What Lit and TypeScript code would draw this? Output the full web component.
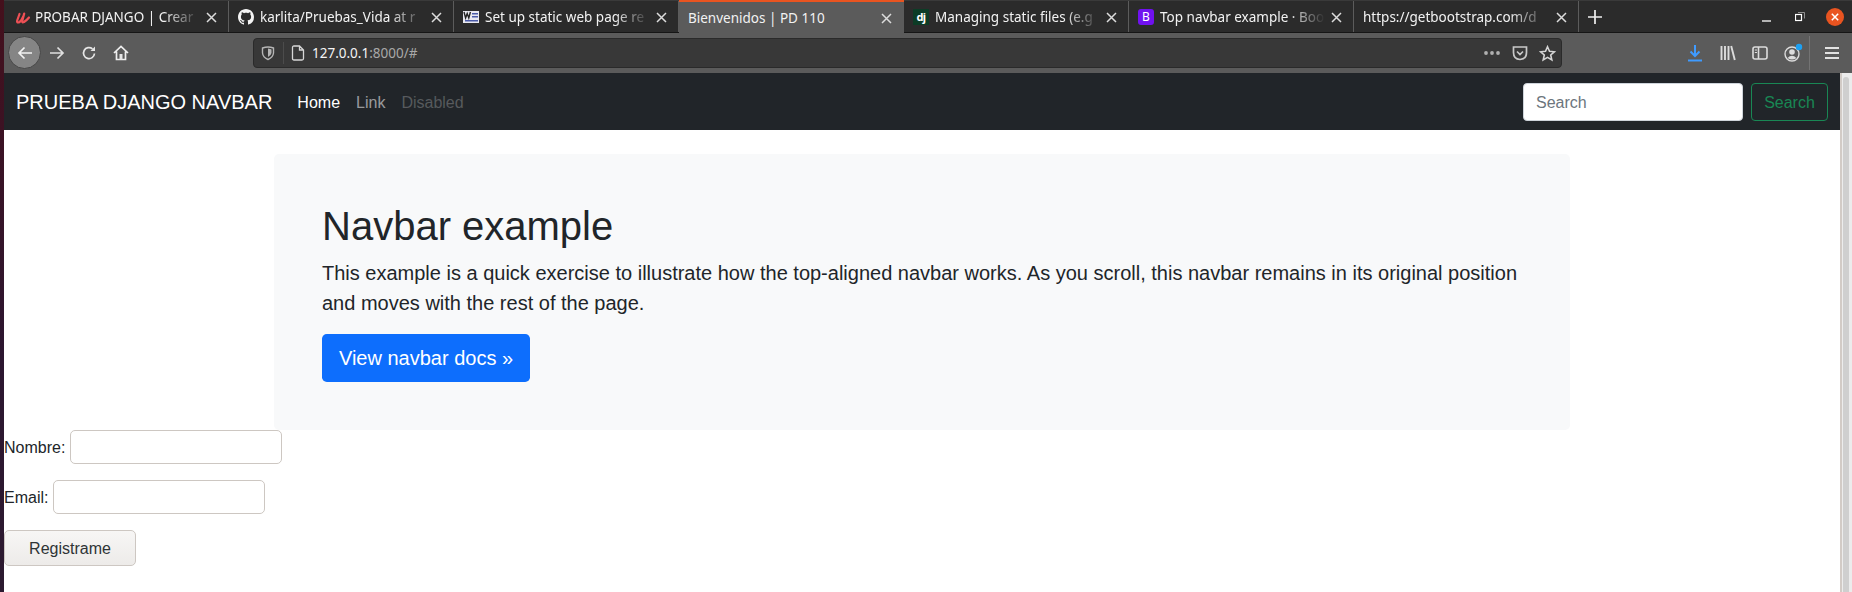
/**
 * Firefox window showing the Bootstrap top navbar example
 */

import { LitElement, html, css, svg } from 'lit';
import { customElement } from 'lit/decorators.js';
import { classMap } from 'lit/directives/class-map.js';

const GITHUB = 'M8 0C3.58 0 0 3.58 0 8c0 3.54 2.29 6.53 5.47 7.59.4.07.55-.17.55-.38 0-.19-.01-.82-.01-1.49-2.01.37-2.53-.49-2.69-.94-.09-.23-.48-.94-.82-1.13-.28-.15-.68-.52-.01-.53.63-.01 1.08.58 1.23.82.72 1.21 1.87.87 2.33.66.07-.52.28-.87.51-1.07-1.78-.2-3.64-.89-3.64-3.95 0-.87.31-1.59.82-2.15-.08-.2-.36-1.02.08-2.12 0 0 .67-.21 2.2.82.64-.18 1.32-.27 2-.27.68 0 1.36.09 2 .27 1.53-1.04 2.2-.82 2.2-.82.44 1.1.16 1.92.08 2.12.51.56.82 1.27.82 2.15 0 3.07-1.87 3.75-3.65 3.95.29.25.54.73.54 1.48 0 1.07-.01 1.93-.01 2.2 0 .21.15.46.55.38A8.013 8.013 0 0016 8c0-4.42-3.58-8-8-8z';

interface Tab {
  title: string;
  icon?: 'udemy' | 'github' | 'word' | 'dj' | 'b';
  active?: boolean;
}

const TABS: Tab[] = [
  { title: 'PROBAR DJANGO | Crear', icon: 'udemy' },
  { title: 'karlita/Pruebas_Vida at r', icon: 'github' },
  { title: 'Set up static web page re', icon: 'word' },
  { title: 'Bienvenidos | PD 110', active: true },
  { title: 'Managing static files (e.g', icon: 'dj' },
  { title: 'Top navbar example · Boo', icon: 'b' },
  { title: 'https://getbootstrap.com/d' },
];

@customElement('app-root')
export class AppRoot extends LitElement {
  static styles = css`
    :host {
      display: flex;
      width: 1852px;
      height: 592px;
      overflow: hidden;
      background: #fff;
      font-family: "Liberation Sans", Arial, sans-serif;
      color: #212529;
    }

    .desk {
      width: 4px;
      flex: none;
      background: linear-gradient(#45101c, #2c1630 60%, #2c1a30);
    }

    .window {
      flex: 1;
      min-width: 0;
      display: flex;
      flex-direction: column;
    }

    /* tab strip */
    .tabbar {
      height: 33px;
      flex: none;
      display: flex;
      background: #2b2b2b;
      border-top: 1px solid #3a3a3a;
      border-bottom: 1px solid #161616;
      box-sizing: border-box;
      color: #f2f2f2;
      font-family: "Noto Sans", sans-serif;
      font-size: 13.5px;
    }

    .tab {
      width: 225px;
      box-sizing: border-box;
      display: flex;
      align-items: center;
      padding-left: 9px;
      border-right: 1px solid #5c5c5c;
      position: relative;
    }

    .tab.active {
      background: #5b5b5b;
      border-right: none;
      height: 33px;
      margin-top: -1px;
      border-top: 2px solid #e95420;
    }

    .fav {
      width: 16px;
      height: 16px;
      flex: none;
      margin-right: 6px;
    }

    .fav svg {
      display: block;
      overflow: visible;
    }

    .fav.dj {
      background: #0c3c26;
      color: #fff;
      font-size: 11px;
      font-weight: 700;
      line-height: 15px;
      text-align: center;
      letter-spacing: -0.5px;
    }

    .fav.b {
      background: #7011f0;
      border-radius: 3px;
      color: #fff;
      font-size: 12px;
      line-height: 16px;
      text-align: center;
    }

    .title {
      width: 170px;
      flex: none;
      white-space: nowrap;
      overflow: hidden;
      -webkit-mask-image: linear-gradient(to right, #000 76%, transparent 97%);
      mask-image: linear-gradient(to right, #000 76%, transparent 97%);
    }

    .tab.noicon .title {
      width: 192px;
    }

    .tab.active .title {
      -webkit-mask-image: none;
      mask-image: none;
    }

    .close {
      position: absolute;
      left: 201px;
      top: 10px;
    }

    .plus {
      margin-left: 8px;
      align-self: center;
      display: block;
    }

    .wm {
      margin-left: auto;
      display: flex;
      align-items: center;
    }

    .wm svg {
      display: block;
    }

    .wm .min {
      margin-right: 23px;
    }

    .wm .restore {
      margin-right: 21px;
    }

    .wm .shut {
      margin-right: 8px;
    }

    /* toolbar */
    .toolbar {
      height: 40px;
      flex: none;
      display: flex;
      align-items: center;
      background: #5b5b5b;
    }

    .back {
      width: 33px;
      height: 33px;
      margin: 0 7px 1px 4px;
      border-radius: 50%;
      background: #858585;
      border: 1px solid #474747;
      box-sizing: border-box;
      display: flex;
      align-items: center;
      justify-content: center;
      flex: none;
    }

    .tool {
      flex: none;
      display: block;
    }

    .urlbar {
      width: 1309px;
      height: 30px;
      margin-left: 124px;
      box-sizing: border-box;
      flex: none;
      display: flex;
      align-items: center;
      background: #383838;
      border: 1px solid #2a2a2a;
      border-radius: 4px;
      font-family: "Noto Sans", sans-serif;
      font-size: 13.5px;
      color: #f4f4f4;
    }

    .urlbar .sep {
      width: 1px;
      height: 22px;
      background: #4c4c4c;
      margin: 0 7px;
    }

    .url {
      margin-left: 7px;
      flex: 1;
    }

    .url span {
      color: #a8a8a8;
    }

    .tools-right {
      display: flex;
      align-items: center;
      margin-left: 126px;
    }

    .divider {
      width: 1px;
      height: 34px;
      background: #737373;
      margin: 0 15px 0 5px;
    }

    /* page */
    .below {
      flex: 1;
      min-height: 0;
      display: flex;
    }

    .page {
      flex: 1;
      min-width: 0;
    }

    .navbar {
      height: 57px;
      box-sizing: border-box;
      display: flex;
      align-items: center;
      padding: 0 12px;
      background: #212529;
    }

    .brand {
      font-size: 20px;
      color: #fff;
      margin-right: 25px;
      padding-top: 2px;
    }

    .links {
      display: flex;
      gap: 16px;
      padding-top: 2px;
      font-size: 16px;
      color: rgba(255, 255, 255, 0.55);
    }

    .links .on {
      color: #fff;
    }

    .links .off {
      color: rgba(255, 255, 255, 0.25);
    }

    .search {
      margin-left: auto;
      display: flex;
      gap: 8px;
    }

    .search input {
      width: 220px;
      height: 38px;
      box-sizing: border-box;
      padding: 7px 12px 5px;
      border: 1px solid #ced4da;
      border-radius: 4px;
      font: 16px "Liberation Sans", Arial, sans-serif;
    }

    .search input::placeholder {
      color: #6c757d;
    }

    .search button {
      height: 38px;
      width: 77px;
      padding: 2px 0 0;
      background: transparent;
      border: 1px solid #198754;
      border-radius: 4px;
      color: #198754;
      font: 16px "Liberation Sans", Arial, sans-serif;
    }

    .jumbo {
      width: 1296px;
      height: 276px;
      box-sizing: border-box;
      margin: 24px 0 0 270px;
      padding: 48px;
      background: #f8f9fa;
      border-radius: 5px;
    }

    h1 {
      margin: 0 0 8px;
      font-size: 40px;
      font-weight: 500;
      line-height: 48px;
    }

    .lead {
      margin: 0 0 16px;
      font-size: 20px;
      line-height: 30px;
    }

    .docs {
      display: inline-block;
      width: 208px;
      height: 48px;
      box-sizing: border-box;
      padding: 9px 0 0;
      background: #0d6efd;
      border-radius: 4.8px;
      color: #fff;
      font-size: 20px;
      line-height: 30px;
      text-align: center;
    }

    form {
      display: flex;
      flex-direction: column;
      align-items: flex-start;
      gap: 16px;
      font-size: 16px;
    }

    .row {
      display: flex;
      align-items: center;
      gap: 4.4px;
    }

    .row label {
      padding-top: 2px;
    }

    .row input {
      width: 212px;
      height: 34px;
      box-sizing: border-box;
      background: #fff;
      border: 1px solid #cdc7c2;
      border-radius: 5px;
    }

    .send {
      width: 132px;
      height: 36px;
      padding: 1px 0 0;
      background: linear-gradient(#f7f6f5, #edebe9);
      border: 1px solid #cdc7c2;
      border-radius: 5px;
      color: #2e3436;
      font: 16px "Liberation Sans", Arial, sans-serif;
    }

    /* scrollbar */
    .scroll {
      width: 12px;
      flex: none;
      display: flex;
      background: #ececec;
      border-left: 2px solid #d2cbc6;
      box-sizing: border-box;
      padding-left: 1px;
    }

    .thumb {
      width: 6px;
      margin-top: 4px;
      background: #cfcfcf;
      border-radius: 3px 3px 0 0;
    }
  `;

  private favicon(icon: Tab['icon']) {
    switch (icon) {
      case 'udemy':
        return html`<div class="fav"><svg width="16" height="16" viewBox="-2 -1 16 16" fill="none" stroke="#ee5055" stroke-width="2.2" stroke-linecap="round">
          <path d="M4.5 4 L2.2 10.5 Q1.6 13 3.8 12.4 Q6 11.6 8 7" />
          <path d="M9.2 3.6 L7.2 11 Q7 13 9 12 Q12 10 14 7.5" />
        </svg></div>`;
      case 'github':
        return html`<div class="fav"><svg width="16" height="16" viewBox="0 0 16 16" fill="#f4f4f4"><path d="${GITHUB}" /></svg></div>`;
      case 'word':
        return html`<div class="fav"><svg width="16" height="16" viewBox="0 0 16 16">
          <rect x="0" y="2" width="16" height="12" fill="#e8e8f0" />
          <path d="M1 3 L2.6 9 L4.2 4.5 L5.8 9 L7.4 3" fill="none" stroke="#222" stroke-width="1.4" />
          <rect x="9" y="4" width="6" height="1.5" fill="#4a5aa8" />
          <rect x="9" y="7" width="6" height="1.5" fill="#4a5aa8" />
          <rect x="2" y="11" width="13" height="1.5" fill="#4a5aa8" />
        </svg></div>`;
      case 'dj':
        return html`<div class="fav dj">dj</div>`;
      case 'b':
        return html`<div class="fav b">B</div>`;
      default:
        return '';
    }
  }

  private stroke(w: number, h: number, body: unknown, color = '#e6e6e6', sw = 1.6) {
    return html`<svg class="tool" width="${w}" height="${h}" viewBox="0 0 ${w} ${h}" fill="none" stroke="${color}" stroke-width="${sw}">${body}</svg>`;
  }

  protected render() {
    const x = html`<svg class="close" width="13" height="13" viewBox="0 0 13 13" stroke="#dcdcdc" stroke-width="1.5"><path d="M2 2 L11 11 M11 2 L2 11" /></svg>`;

    return html`
      <div class="desk"></div>
      <div class="window">
        <div class="tabbar">
          ${TABS.map(
            (t) => html`
              <div class=${classMap({ tab: true, active: !!t.active, noicon: !t.icon })}>
                ${this.favicon(t.icon)}
                <span class="title">${t.title}</span>
                ${x}
              </div>
            `,
          )}
          <svg class="plus" width="16" height="16" viewBox="0 0 16 16" stroke="#f0f0f0" stroke-width="1.7"><path d="M8 1 V15 M1 8 H15" /></svg>
          <div class="wm">
            <svg class="min" width="10" height="10" viewBox="0 0 10 10" stroke="#fff" stroke-width="1.3"><path d="M0 9 H9" /></svg>
            <svg class="restore" width="10" height="10" viewBox="0 0 10 10" fill="none" stroke="#fff"><rect x="0.5" y="2.5" width="6" height="6" stroke-width="1.2" /><path d="M3 .5 H9.5 V6.5" stroke-width=".8" stroke="#aaa" /></svg>
            <svg class="shut" width="18" height="18" viewBox="0 0 18 18"><circle cx="9" cy="9" r="9" fill="#e95420" /><path d="M5.8 5.8 L12.2 12.2 M12.2 5.8 L5.8 12.2" stroke="#fff" stroke-width="1.5" /></svg>
          </div>
        </div>

        <div class="toolbar">
          <div class="back">
            ${this.stroke(18, 18, svg`<path d="M16 9 H3 M8.5 3.5 L3 9 L8.5 14.5" />`, '#f2f2f2', 1.7)}
          </div>
          ${this.stroke(18, 18, svg`<path d="M2 9 H15 M9.5 3.5 L15 9 L9.5 14.5" />`, '#e0e0e0', 1.7)}
          <span style="width:15px"></span>
          ${this.stroke(16, 16, svg`<path d="M13.5 8.5 A5.5 5.5 0 1 1 11.5 3.8" /><path d="M14 1.5 V6 H9.5" fill="#e6e6e6" stroke="none" />`, '#e6e6e6', 1.7)}
          <span style="width:16px"></span>
          ${this.stroke(16, 16, svg`<path d="M1 8 L8 1.5 L15 8 M3.5 6.5 V14.5 H12.5 V6.5" /><rect x="6.5" y="9" width="3" height="5.5" fill="#e6e6e6" stroke="none" />`, '#efefef', 1.7)}

          <div class="urlbar">
            <span style="width:6px"></span>
            ${this.stroke(16, 16, svg`<path d="M2.5 3 Q8 1 13.5 3 V8 Q13 12.5 8 14.5 Q3 12.5 2.5 8 Z" /><path d="M8 3.5 Q10.5 3.8 11.5 4.5 V8 Q11 10.5 8 12 Z" fill="#b5b5b5" stroke="none" />`, '#b5b5b5', 1.4)}
            <span class="sep"></span>
            ${this.stroke(14, 16, svg`<path d="M1.5 2.5 Q1.5 1 3 1 H8.5 L12.5 5 V13.5 Q12.5 15 11 15 H3 Q1.5 15 1.5 13.5 Z M8.5 1 V5 H12.5" />`, '#d6d6d6', 1.3)}
            <span class="url">127.0.0.1<span>:8000/#</span></span>
            <svg class="tool" width="16" height="4" viewBox="0 0 16 4" fill="#b0b0b0"><circle cx="2" cy="2" r="1.9" /><circle cx="8" cy="2" r="1.9" /><circle cx="14" cy="2" r="1.9" /></svg>
            <span style="width:12px"></span>
            ${this.stroke(16, 16, svg`<path d="M1.5 2 H14.5 V7.5 Q14.5 14 8 14.5 Q1.5 14 1.5 7.5 Z M5 6.5 L8 9.5 L11 6.5" />`, '#c8c8c8', 1.7)}
            <span style="width:11px"></span>
            ${this.stroke(17, 17, svg`<path d="M8.5 1.8 L10.5 6.3 L15.4 6.8 L11.7 10 L12.8 14.9 L8.5 12.4 L4.2 14.9 L5.3 10 L1.6 6.8 L6.5 6.3 Z" />`, '#d6d6d6', 1.6)}
            <span style="width:5px"></span>
          </div>

          <div class="tools-right">
            ${this.stroke(14, 18, svg`<path d="M7 1 V12 M2.5 7.5 L7 12 L11.5 7.5" /><path d="M0 16.5 H14" />`, '#3f9bff', 2)}
            <span style="width:18px"></span>
            ${this.stroke(16, 16, svg`<path d="M1.5 1 V15 M5 1 V15 M8.5 1 V15 M11.2 1 L14.8 15" />`, '#dcdcdc', 1.9)}
            <span style="width:16px"></span>
            ${this.stroke(16, 14, svg`<rect x="1" y="1" width="14" height="12" rx="2" /><path d="M6.5 1 V13" /><path d="M2.8 4 H5 M2.8 6.5 H5" stroke-width="1.2" />`, '#dcdcdc', 1.6)}
            <span style="width:16px"></span>
            <svg class="tool" width="20" height="20" viewBox="0 0 20 20" fill="none" stroke="#dcdcdc" stroke-width="1.4" style="overflow:visible">
              <circle cx="8" cy="11" r="7" />
              <circle cx="8" cy="9" r="2.8" fill="#dcdcdc" stroke="none" />
              <path d="M3.5 15 Q8 10.5 12.5 15 Q8 18 3.5 15" fill="#dcdcdc" stroke="none" />
              <circle cx="15" cy="4" r="3.2" fill="#1da0f2" stroke="none" />
            </svg>
            <span class="divider"></span>
            ${this.stroke(14, 14, svg`<path d="M0 2 H14 M0 7 H14 M0 12 H14" />`, '#e2e2e2', 2)}
          </div>
        </div>

        <div class="below">
          <div class="page">
            <nav class="navbar">
              <span class="brand">PRUEBA DJANGO NAVBAR</span>
              <div class="links">
                <span class="on">Home</span>
                <span>Link</span>
                <span class="off">Disabled</span>
              </div>
              <div class="search">
                <input type="search" placeholder="Search" />
                <button type="button">Search</button>
              </div>
            </nav>

            <main class="jumbo">
              <h1>Navbar example</h1>
              <p class="lead">This example is a quick exercise to illustrate how the top-aligned navbar works. As you scroll, this navbar remains in its original position and moves with the rest of the page.</p>
              <span class="docs">View navbar docs »</span>
            </main>

            <form>
              <div class="row"><label>Nombre:</label><input type="text" /></div>
              <div class="row"><label>Email:</label><input type="email" /></div>
              <button class="send" type="button">Registrame</button>
            </form>
          </div>
          <div class="scroll"><div class="thumb"></div></div>
        </div>
      </div>
    `;
  }
}

declare global {
  interface HTMLElementTagNameMap {
    'app-root': AppRoot;
  }
}
